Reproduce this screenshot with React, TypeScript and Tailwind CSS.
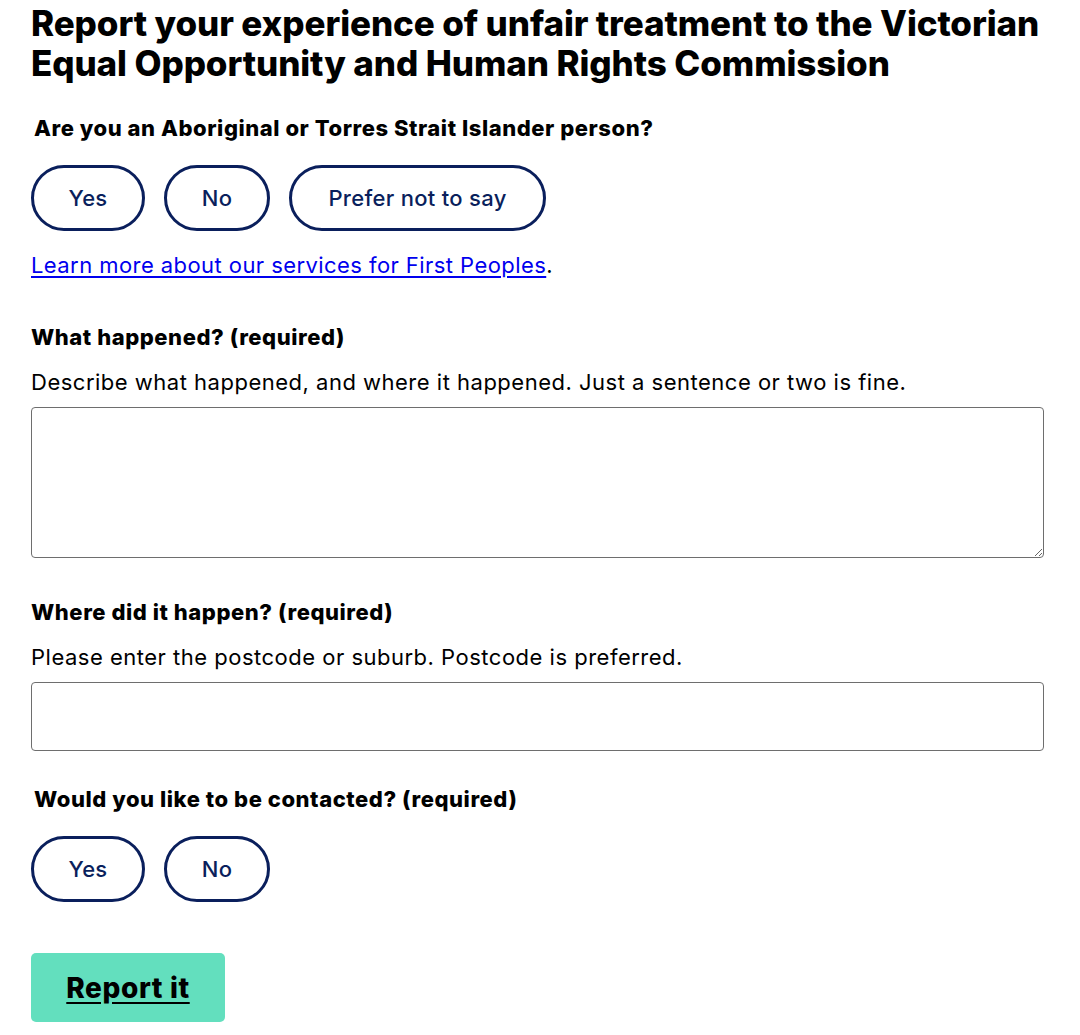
import React, { useState } from 'react';

// Pill-shaped choice button used by the radio style questions
const Choice = ({ label, selected, onClick, className = '' }: { label: string; selected: boolean; onClick: () => void; className?: string }) => (
  <button
    type="button"
    onClick={onClick}
    className={`h-[66px] rounded-full border-[3px] border-[#0a1f5c] text-[22px] font-medium tracking-[0.3px] ${selected ? 'bg-[#0a1f5c] text-white' : 'bg-white text-[#0a1f5c]'} ${className}`}
  >
    {label}
  </button>
);

export default function App() {
  const [aboriginal, setAboriginal] = useState<string | null>(null);
  const [contact, setContact] = useState<string | null>(null);

  const label = 'text-[22px] leading-[30px] font-extrabold tracking-[0.55px]';
  const hint = 'text-[22px] leading-[30px] tracking-[0.5px]';

  return (
    <div className="min-h-screen bg-white text-black font-['Inter',sans-serif]">
      <div className="pl-[31px] pr-[36px] pt-[3px]">
        <h1 className="text-[35px] leading-[40px] font-extrabold tracking-[-0.1px]">
          Report your experience of unfair treatment to the Victorian Equal Opportunity and Human Rights Commission
        </h1>

        <p className={`mt-[30px] ml-[3px] ${label}`}>Are you an Aboriginal or Torres Strait Islander person?</p>
        <div className="mt-[22px] flex gap-[19px]">
          <Choice label="Yes" selected={aboriginal === 'yes'} onClick={() => setAboriginal('yes')} className="w-[114px]" />
          <Choice label="No" selected={aboriginal === 'no'} onClick={() => setAboriginal('no')} className="w-[106px]" />
          <Choice label="Prefer not to say" selected={aboriginal === 'na'} onClick={() => setAboriginal('na')} className="w-[257px]" />
        </div>
        <p className="mt-[18px] text-[22px] leading-[32px] tracking-[0.43px]">
          <a href="#" className="text-[#0000ee] underline underline-offset-[3px]">Learn more about our services for First Peoples</a>.
        </p>

        <p className={`mt-[41px] ${label}`}>What happened? (required)</p>
        <p className={`mt-[15px] ${hint}`}>Describe what happened, and where it happened. Just a sentence or two is fine.</p>
        <textarea className="mt-[10px] block w-full h-[151px] rounded-[4px] border border-[#6e6e6e] resize-y" />

        <p className={`mt-[39px] ${label}`}>Where did it happen? (required)</p>
        <p className={`mt-[15px] ${hint}`}>Please enter the postcode or suburb. Postcode is preferred.</p>
        <input type="text" className="mt-[10px] block w-full h-[69px] rounded-[4px] border border-[#6e6e6e]" />

        <p className={`mt-[33px] ml-[3px] ${label}`}>Would you like to be contacted? (required)</p>
        <div className="mt-[22px] flex gap-[19px]">
          <Choice label="Yes" selected={contact === 'yes'} onClick={() => setContact('yes')} className="w-[114px]" />
          <Choice label="No" selected={contact === 'no'} onClick={() => setContact('no')} className="w-[106px]" />
        </div>

        <button type="button" className="mt-[51px] block w-[194px] h-[69px] rounded-[5px] bg-[#63dfbe] text-[28px] font-extrabold underline underline-offset-[4px] tracking-[0.6px]">
          Report it
        </button>
      </div>
    </div>
  );
}
